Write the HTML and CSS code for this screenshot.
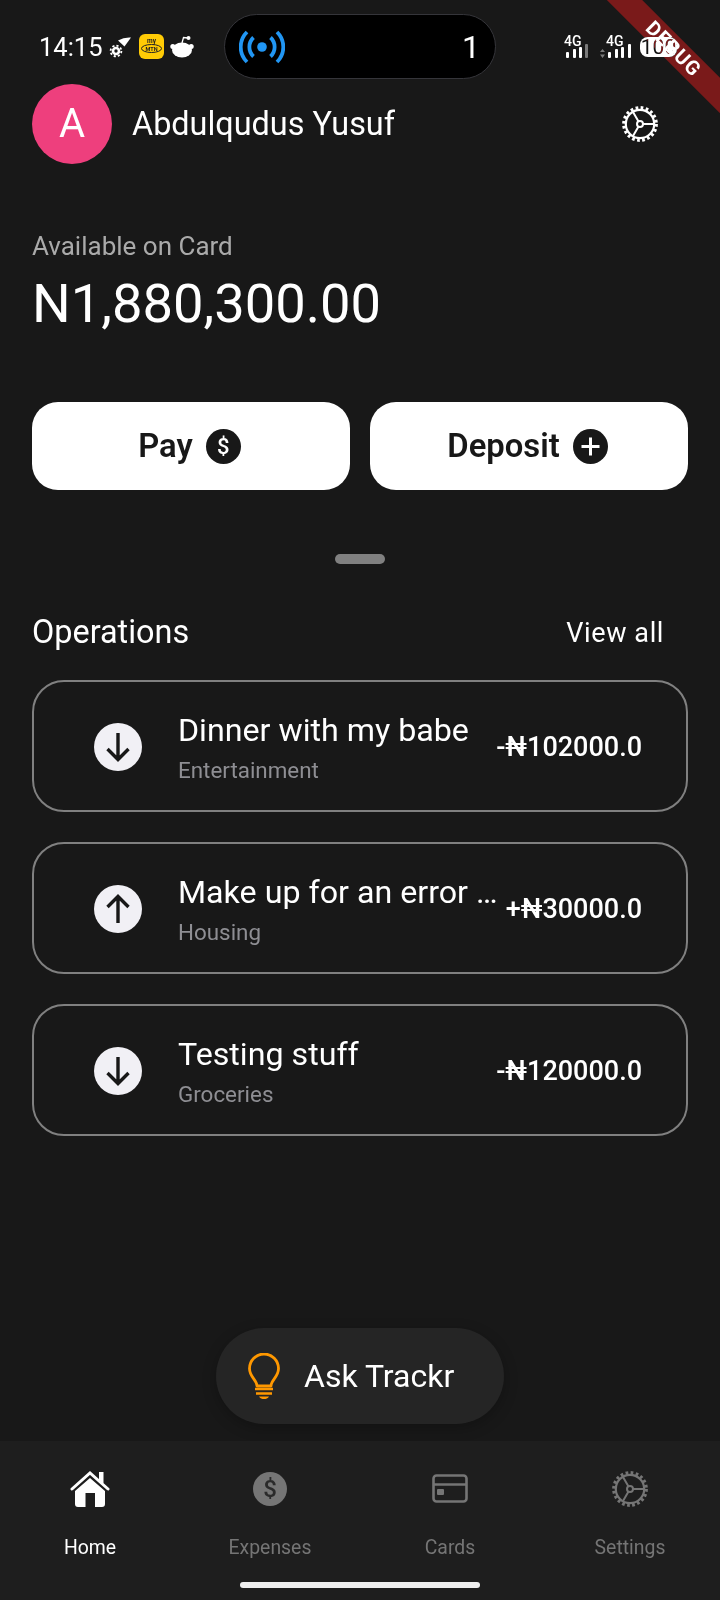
FILE: index.html
```html
<!DOCTYPE html>
<html lang="en">
<head>
  <meta charset="UTF-8">
  <meta name="viewport" content="width=device-width, initial-scale=1.0">
  <title>Trackr Home</title>
  <link rel="stylesheet" href="styles.css">
</head>
<body>

  <svg class="defs" width="0" height="0">
    <symbol id="gear" viewBox="0 0 36 36">
      <g fill="none" stroke="currentColor">
        <circle cx="18" cy="18" r="16.2" stroke-width="3.4" stroke-dasharray="2.7 2.4"/>
        <circle cx="18" cy="18" r="14.2" stroke-width="2.2"/>
        <circle cx="18" cy="18" r="3" stroke-width="2"/>
        <path d="M21 18H32M16.5 15.4L11 5.9M16.5 20.6L11 30.1" stroke-width="2"/>
      </g>
    </symbol>
    <symbol id="signal-bars" viewBox="0 0 24 14">
      <rect x="0" y="8" width="3" height="6" rx="1" fill="#fff"/>
      <rect x="7" y="5" width="3" height="9" rx="1" fill="#fff"/>
      <rect x="13" y="3" width="3" height="11" rx="1" fill="#fff"/>
    </symbol>
  </svg>

  <div class="screen">
    <div class="status-bar">
      <div class="status-left">
        <span class="clock">14:15</span>
        <svg class="st-wifi" width="22" height="21" viewBox="0 0 22 21">
          <path d="M9 3.500Q15 0 22 0.500L15.500 9.500Z" fill="#fff"/>
          <circle cx="7" cy="14" r="3" fill="none" stroke="#fff" stroke-width="2.600"/>
          <circle cx="7" cy="14" r="5.400" fill="none" stroke="#fff" stroke-width="1.800" stroke-dasharray="2.200 2"/>
        </svg>
        <svg class="st-mtn" width="25" height="25" viewBox="0 0 25 25">
          <rect width="25" height="25" rx="6" fill="#ffcb05"/>
          <text x="12.500" y="8.500" font-size="6.500" font-weight="700" text-anchor="middle" fill="#222">my</text>
          <ellipse cx="12.500" cy="14.500" rx="10" ry="4" fill="none" stroke="#222" stroke-width="1"/>
          <text x="12.500" y="16.500" font-size="5.500" font-weight="700" text-anchor="middle" fill="#222">MTN</text>
        </svg>
        <svg class="st-reddit" width="24" height="23" viewBox="0 0 24 23">
          <ellipse cx="12" cy="15" rx="10" ry="7.500" fill="#fff"/>
          <circle cx="2.800" cy="11.500" r="2.500" fill="#fff"/>
          <circle cx="21.200" cy="11.500" r="2.500" fill="#fff"/>
          <path d="M12 8L13.500 2.500L18 3" fill="none" stroke="#fff" stroke-width="1.300"/>
          <circle cx="18.500" cy="3" r="2" fill="#fff"/>
        </svg>
      </div>

      <div class="island">
        <svg width="46" height="34" viewBox="0 0 46 34">
          <circle cx="23" cy="17" r="4.800" fill="#2196f3"/>
          <g fill="none" stroke="#2196f3" stroke-width="3.800" stroke-linecap="butt">
            <path d="M14.500 7.500A13 13 0 0 0 14.500 26.500M31.500 7.500A13 13 0 0 1 31.500 26.500"/>
            <path d="M8 2A21 21 0 0 0 8 32M38 2A21 21 0 0 1 38 32"/>
          </g>
        </svg>
        <span class="island-count">1</span>
      </div>

      <div class="status-right">
        <svg class="net" width="28" height="26" viewBox="0 -2 28 26">
          <text x="0" y="11" class="net-label">4G</text>
          <use href="#signal-bars" x="2" y="9" width="24" height="14"/>
          <rect x="21" y="9" width="3" height="14" rx="1" fill="#7a7a7a"/>
        </svg>
        <svg class="net" width="34" height="26" viewBox="0 -2 34 26">
          <text x="6" y="11" class="net-label">4G</text>
          <path d="M2.500 14L5 17H0ZM2.500 23L0 19.500H5Z" fill="#7a7a7a"/>
          <use href="#signal-bars" x="8" y="9" width="24" height="14"/>
          <rect x="28" y="9" width="3" height="14" rx="1" fill="#fff"/>
        </svg>
        <span class="battery">100</span>
      </div>
    </div>

    <div class="content">
      <div class="profile">
        <div class="avatar">A</div>
        <div class="profile-name">Abdulqudus Yusuf</div>
        <svg class="profile-gear" width="36" height="36"><use href="#gear"/></svg>
      </div>

      <div class="balance-label">Available on Card</div>
      <div class="balance">N1,880,300.00</div>

      <div class="actions">
        <button class="action-btn">Pay <span class="coin">$</span></button>
        <button class="action-btn">Deposit
          <svg class="plus" width="35" height="35" viewBox="0 0 35 35">
            <circle cx="17.500" cy="17.500" r="17.500" fill="#181818"/>
            <path d="M17.500 8.500V26.500M8.500 17.500H26.500" stroke="#fff" stroke-width="3"/>
          </svg>
        </button>
      </div>

      <div class="handle"></div>

      <div class="ops-head">
        <span class="ops-title">Operations</span>
        <span class="ops-link">View all</span>
      </div>

      <div class="op-card">
        <svg class="op-icon" width="48" height="48" viewBox="0 0 48 48">
          <circle cx="24" cy="24" r="24" fill="#f1f0f5"/>
          <path d="M24 10V35M13.500 26L24 36.500L34.500 26" fill="none" stroke="#181818" stroke-width="3.400"/>
        </svg>
        <div class="op-text">
          <div class="op-title">Dinner with my babe</div>
          <div class="op-sub">Entertainment</div>
        </div>
        <div class="op-amount">-₦102000.0</div>
      </div>

      <div class="op-card">
        <svg class="op-icon" width="48" height="48" viewBox="0 0 48 48">
          <circle cx="24" cy="24" r="24" fill="#f1f0f5"/>
          <path d="M24 38V13M13.500 22L24 11.500L34.500 22" fill="none" stroke="#181818" stroke-width="3.400"/>
        </svg>
        <div class="op-text">
          <div class="op-title">Make up for an error …</div>
          <div class="op-sub">Housing</div>
        </div>
        <div class="op-amount">+₦30000.0</div>
      </div>

      <div class="op-card">
        <svg class="op-icon" width="48" height="48" viewBox="0 0 48 48">
          <circle cx="24" cy="24" r="24" fill="#f1f0f5"/>
          <path d="M24 10V35M13.500 26L24 36.500L34.500 26" fill="none" stroke="#181818" stroke-width="3.400"/>
        </svg>
        <div class="op-text">
          <div class="op-title">Testing stuff</div>
          <div class="op-sub">Groceries</div>
        </div>
        <div class="op-amount">-₦120000.0</div>
      </div>

      <button class="ask-btn">
        <svg width="32" height="46" viewBox="0 0 32 46">
          <path d="M9 33C9 27 1.500 24 1.500 15.500A14.500 14.500 0 0 1 30.500 15.500C30.500 24 23 27 23 33Z" fill="none" stroke="#ff9800" stroke-width="2.800" stroke-linejoin="round"/>
          <path d="M7 36H25M8 40.500H24" stroke="#ff9800" stroke-width="2.600"/>
          <path d="M11 43.500H21C20 45.500 18 46 16 46C14 46 12 45.500 11 43.500Z" fill="#ff9800"/>
        </svg>
        <span>Ask Trackr</span>
      </button>
    </div>

    <div class="nav">
      <div class="nav-items">
        <div class="nav-item nav-item-on">
          <svg width="40" height="40" viewBox="0 0 40 40">
            <path d="M2 20L20 4L38 20" fill="none" stroke="currentColor" stroke-width="3" stroke-linecap="round"/>
            <path d="M29 3H33.500V14H29Z" fill="currentColor"/>
            <path d="M5 22L20 9L35 22V35A3 3 0 0 1 32 38H25V24H15.500V38H8A3 3 0 0 1 5 35Z" fill="currentColor"/>
          </svg>
          <span>Home</span>
        </div>
        <div class="nav-item">
          <span class="coin coin-nav">$</span>
          <span>Expenses</span>
        </div>
        <div class="nav-item">
          <svg width="40" height="40" viewBox="0 0 40 40">
            <rect x="3.500" y="6.500" width="33" height="26" rx="3" fill="none" stroke="currentColor" stroke-width="2.600"/>
            <path d="M3.500 15.500H36.500" stroke="currentColor" stroke-width="2.600"/>
            <rect x="7" y="20" width="7" height="6" rx="1" fill="currentColor"/>
          </svg>
          <span>Cards</span>
        </div>
        <div class="nav-item">
          <svg width="40" height="40" viewBox="-2 -2 40 40"><use href="#gear" width="36" height="36"/></svg>
          <span>Settings</span>
        </div>
      </div>
      <div class="home-bar"></div>
    </div>

    <div class="debug-ribbon">DEBUG</div>
  </div>

</body>
</html>
```

FILE: styles.css
```css
body {
  margin: 0;
  background-color: #181818;
  color: white;
  font-family: Roboto, "Liberation Sans", sans-serif;
}
.defs {
  position: absolute;
}
.screen {
  width: 720px;
  height: 1600px;
  display: flex;
  flex-direction: column;
  position: relative;
  overflow: hidden;
}

/* Status bar */
.status-bar {
  height: 65px;
  margin-top: 14px;
  padding-left: 39px;
  display: grid;
  grid-template-columns: 185px 272px 1fr;
  align-items: center;
}
.status-left {
  display: flex;
  align-items: center;
}
.clock {
  font-size: 25.500px;
  width: 70px;
}
.st-wifi {
  margin-top: 1px;
}
.st-mtn {
  margin-left: 8px;
}
.st-reddit {
  margin-left: 6px;
}
.island {
  height: 65px;
  box-sizing: border-box;
  background-color: black;
  border: 1px solid #35353a;
  border-radius: 33px;
  display: flex;
  align-items: center;
  justify-content: space-between;
  padding: 0 15px 0 14px;
}
.island-count {
  font-size: 32px;
}
.status-right {
  display: flex;
  align-items: center;
  margin-left: 68px;
}
.status-right svg + svg {
  margin-left: 8px;
}
.net {
  margin-top: -2px;
}
.net-label {
  font-size: 14px;
  font-weight: 500;
  fill: white;
}
.battery {
  margin-left: 6px;
  width: 37px;
  height: 20px;
  background-color: white;
  border-radius: 8px;
  color: #111;
  font-size: 21px;
  line-height: 20px;
  text-align: center;
}

/* Main */
.content {
  flex: 1;
  padding: 5px 32px 17px;
  display: flex;
  flex-direction: column;
}
.profile {
  display: flex;
  align-items: center;
}
.avatar {
  width: 80px;
  height: 80px;
  border-radius: 50%;
  background-color: #ee3f7d;
  font-size: 40px;
  line-height: 80px;
  text-align: center;
}
.profile-name {
  margin-left: 20px;
  font-size: 32.400px;
}
.profile-gear {
  margin-left: auto;
  margin-right: 30px;
  color: white;
}
.balance-label {
  margin-top: 67px;
  font-size: 26px;
  line-height: 30px;
  color: #aaaaaa;
}
.balance {
  margin-top: 16px;
  font-size: 54.300px;
  line-height: 54px;
}
.actions {
  margin-top: 71px;
  display: flex;
  gap: 20px;
}
.action-btn {
  flex: 1;
  height: 88px;
  border: none;
  border-radius: 26px;
  background-color: white;
  color: #181818;
  font-family: inherit;
  font-size: 32.800px;
  font-weight: 600;
  padding: 0 3px 0 0;
  display: flex;
  align-items: center;
  justify-content: center;
  gap: 13px;
}
.coin {
  width: 35px;
  height: 35px;
  border-radius: 50%;
  background-color: #181818;
  color: white;
  font-size: 22px;
  font-weight: 500;
  line-height: 35px;
  text-align: center;
}
.handle {
  align-self: center;
  width: 50px;
  height: 10px;
  border-radius: 5px;
  background-color: #808080;
  margin-top: 64px;
}
.ops-head {
  margin-top: 50px;
  height: 36px;
  padding-right: 24px;
  display: flex;
  align-items: center;
  justify-content: space-between;
}
.ops-title {
  font-size: 32.400px;
}
.ops-link {
  margin-top: 1px;
  font-size: 27px;
  letter-spacing: 0.600px;
}

/* Operation cards */
.op-card {
  height: 132px;
  box-sizing: border-box;
  margin-top: 30px;
  border: 2px solid #808080;
  border-radius: 32px;
  padding: 2px 44px 0 60px;
  display: flex;
  align-items: center;
}
.op-icon {
  flex-shrink: 0;
}
.op-text {
  margin-left: 36px;
  white-space: nowrap;
}
.op-title {
  font-size: 32.200px;
  line-height: 38px;
}
.op-sub {
  margin-top: 7px;
  font-size: 22.400px;
  line-height: 28px;
  color: #8e8e93;
}
.op-amount {
  margin-left: auto;
  font-size: 27px;
  font-weight: 500;
  white-space: nowrap;
}

/* Ask button */
.ask-btn {
  margin-top: auto;
  align-self: center;
  width: 288px;
  height: 96px;
  border: none;
  border-radius: 48px;
  background-color: #252525;
  box-shadow: 0 4px 14px rgba(0, 0, 0, 0.25);
  color: white;
  font-family: inherit;
  font-size: 32px;
  padding: 0 0 0 32px;
  display: flex;
  align-items: center;
  gap: 24px;
}

/* Bottom navigation */
.nav {
  height: 159px;
  background-color: #1e1e1e;
  display: flex;
  flex-direction: column;
  align-items: center;
}
.nav-items {
  align-self: stretch;
  display: grid;
  grid-template-columns: repeat(4, 1fr);
  padding-top: 28px;
}
.nav-item {
  display: flex;
  flex-direction: column;
  align-items: center;
  color: #757575;
  font-size: 19.400px;
  line-height: 24px;
  gap: 27px;
}
.nav-item svg {
  display: block;
}
.nav-item-on {
  color: white;
}
.coin-nav {
  width: 34px;
  height: 34px;
  margin: 3px 0;
  background-color: #757575;
  color: #2a2a2a;
  font-size: 24px;
  font-weight: 500;
  line-height: 34px;
}
.home-bar {
  width: 240px;
  height: 6px;
  border-radius: 3px;
  background-color: #eeeeee;
  margin-top: 22px;
}

/* Debug banner, lighten keeps the battery pill white where they cross */
.debug-ribbon {
  position: absolute;
  top: 35px;
  right: -32px;
  width: 160px;
  height: 25px;
  background-color: #7a1a1a;
  color: white;
  font-size: 20px;
  font-weight: 700;
  line-height: 25px;
  letter-spacing: 1px;
  text-align: center;
  text-indent: 4px;
  transform: rotate(45deg);
  mix-blend-mode: lighten;
}
```
